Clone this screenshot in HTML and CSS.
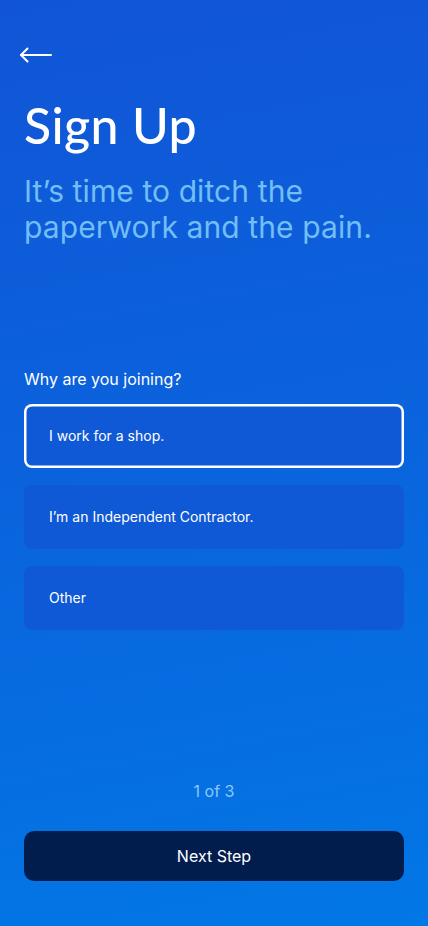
FILE: index.html
```html
<!DOCTYPE html>
<html lang="en">
<head>
<meta charset="utf-8">
<meta name="viewport" content="width=device-width, initial-scale=1">
<title>Sign Up</title>
<link rel="stylesheet" href="styles.css">
</head>
<body>
<main class="screen">
  <header class="top">
    <button class="back" aria-label="Back">
      <svg width="34" height="16" viewBox="0 0 34 16" fill="none" stroke="#fff" stroke-width="2" stroke-linecap="round" stroke-linejoin="round">
        <path d="M2 8H32"/>
        <path d="M8.5 1.5L2 8L8.5 14.5"/>
      </svg>
    </button>
    <h1 class="title">Sign Up</h1>
    <p class="subtitle">It’s time to ditch the paperwork and the pain.</p>
  </header>

  <section class="question">
    <p class="label">Why are you joining?</p>
    <div class="options">
      <button class="option selected">I work for a shop.</button>
      <button class="option">I’m an Independent Contractor.</button>
      <button class="option">Other</button>
    </div>
  </section>

  <footer class="bottom">
    <p class="progress">1 of 3</p>
    <button class="next">Next Step</button>
  </footer>
</main>
</body>
</html>
```

FILE: styles.css
```css
* { box-sizing: border-box; }
html, body { margin: 0; padding: 0; }
body {
  font-family: Inter, "Noto Sans", sans-serif;
  color: #fff;
}
.screen {
  width: 428px;
  height: 926px;
  background: linear-gradient(170deg, #1155d6 0%, #0b62dc 45%, #0277e6 100%);
  display: flex;
  flex-direction: column;
  padding: 0 24px;
}
.top {
  padding-top: 46px;
}
.back {
  background: none;
  border: 0;
  padding: 0;
  margin-left: -5px;
  display: block;
  height: 20px;
  cursor: pointer;
}
.title {
  margin: 29px 0 0;
  font-family: Lato, sans-serif;
  font-weight: 500;
  font-size: 50px;
  line-height: 60px;
  letter-spacing: 0.4px;
}
.subtitle {
  margin: 18px 0 0;
  font-size: 30px;
  line-height: 36px;
  color: #72bef6;
  font-weight: 400;
  letter-spacing: 0.1px;
}
.question {
  margin-top: 123px;
}
.label {
  margin: 0;
  font-size: 16px;
  line-height: 22px;
}
.options {
  margin-top: 14px;
  display: flex;
  flex-direction: column;
  gap: 17.5px;
}
.option {
  height: 63.5px;
  width: 100%;
  border: 0;
  border-radius: 8px;
  background: #1059d6;
  color: #fff;
  font-family: Inter, sans-serif;
  font-size: 14px;
  text-align: left;
  padding: 0 25px;
}
.option.selected {
  box-shadow: inset 0 0 0 2.5px #fff;
}
.bottom {
  margin-top: auto;
  padding-bottom: 45px;
  display: flex;
  flex-direction: column;
  align-items: center;
}
.progress {
  margin: 0;
  font-size: 16px;
  line-height: 20px;
  color: #8ac9f7;
}
.next {
  margin-top: 30px;
  width: 100%;
  height: 50px;
  border: 0;
  border-radius: 10px;
  background: #001d4e;
  color: #fff;
  font-family: Inter, sans-serif;
  font-size: 16px;
  font-weight: 400;
}
```
